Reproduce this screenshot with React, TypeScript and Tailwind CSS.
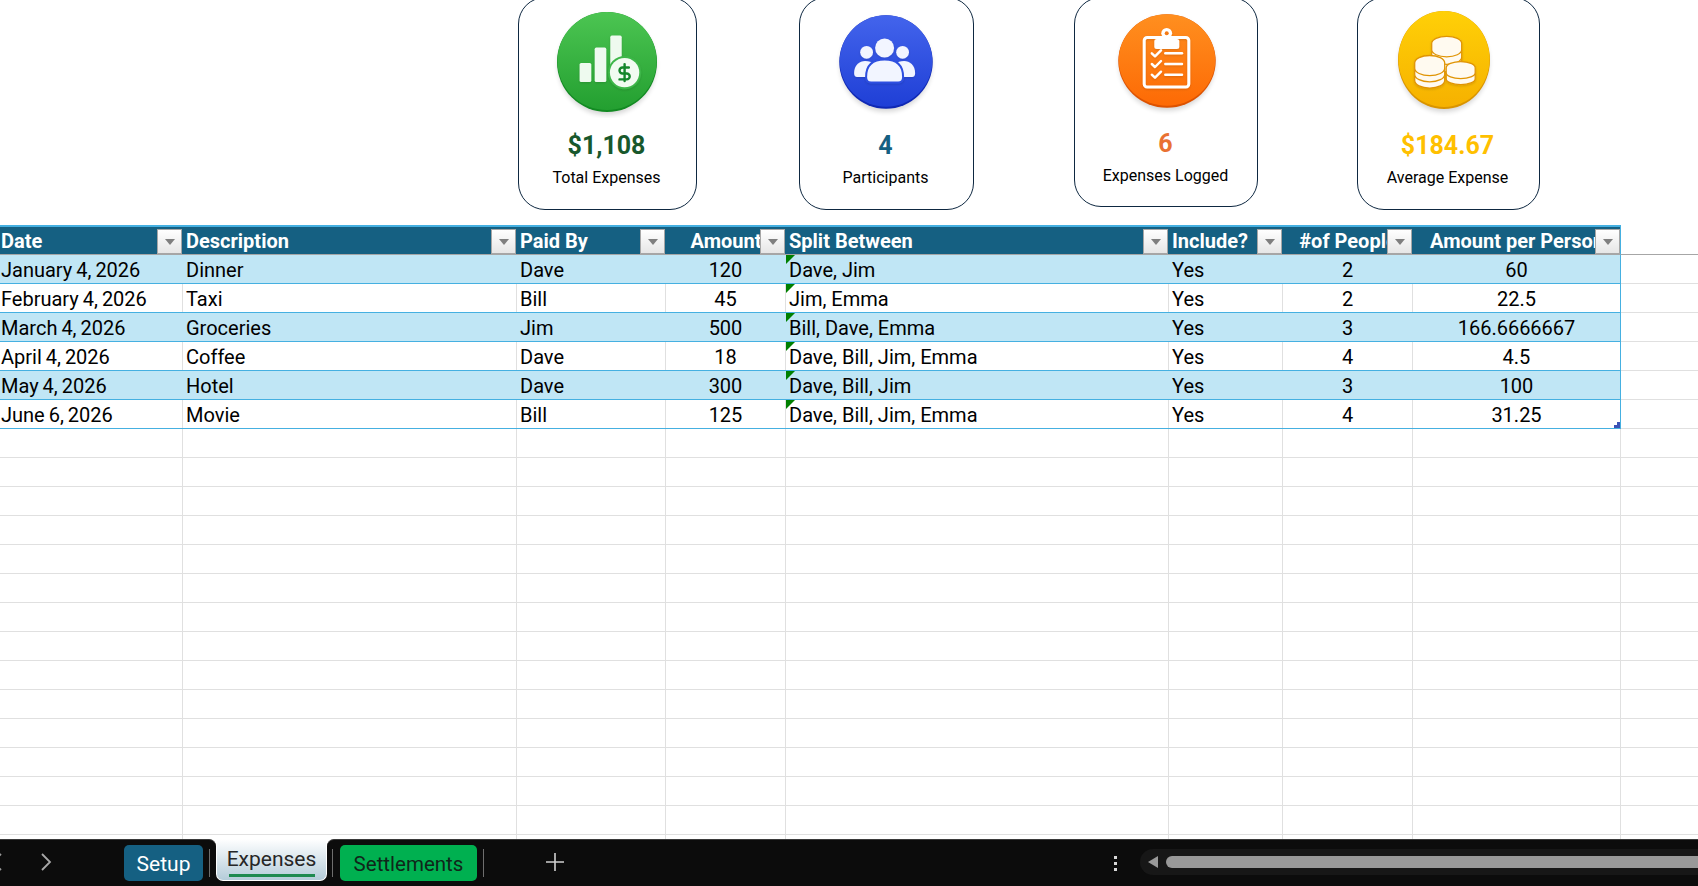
import React from "react";

const widths = ["w-[183px]", "w-[334px]", "w-[149px]", "w-[120px]", "w-[383px]", "w-[114px]", "w-[130px]", "w-[208px]"];
const align = ["pl-[1px]", "pl-[3px]", "pl-[3px]", "text-center", "pl-[3px]", "pl-[3px]", "text-center", "text-center"];

const headers = ["Date", "Description", "Paid By", "Amount", "Split Between", "Include?", "#of People", "Amount per Person"];
const rows = [
  ["January 4, 2026", "Dinner", "Dave", "120", "Dave, Jim", "Yes", "2", "60"],
  ["February 4, 2026", "Taxi", "Bill", "45", "Jim, Emma", "Yes", "2", "22.5"],
  ["March 4, 2026", "Groceries", "Jim", "500", "Bill, Dave, Emma", "Yes", "3", "166.6666667"],
  ["April 4, 2026", "Coffee", "Dave", "18", "Dave, Bill, Jim, Emma", "Yes", "4", "4.5"],
  ["May 4, 2026", "Hotel", "Dave", "300", "Dave, Bill, Jim", "Yes", "3", "100"],
  ["June 6, 2026", "Movie", "Bill", "125", "Dave, Bill, Jim, Emma", "Yes", "4", "31.25"],
];

function Disc({ id, rx, ry, top, bottom, edge, children }: { id: string; rx: number; ry: number; top: string; bottom: string; edge: string; children: React.ReactNode }) {
  return (
    <svg width="112" height="112" viewBox="-56 -56 112 112" className="block shrink-0">
      <defs>
        <linearGradient id={id} x1="0" y1="0" x2="0" y2="1">
          <stop offset="0" stopColor={top} />
          <stop offset="1" stopColor={bottom} />
        </linearGradient>
        <filter id={id + "b"} x="-30%" y="-30%" width="160%" height="160%">
          <feGaussianBlur stdDeviation="2.5" />
        </filter>
        <filter id={id + "s"} x="-30%" y="-30%" width="160%" height="160%">
          <feDropShadow dx="0" dy="1" stdDeviation="0.8" floodColor="#000" floodOpacity="0.14" />
        </filter>
      </defs>
      <ellipse cx="0" cy="3" rx={rx - 1} ry={ry} fill="#000" opacity="0.16" filter={`url(#${id}b)`} />
      <ellipse cx="0" cy="0" rx={rx} ry={ry} fill={edge} />
      <ellipse cx="0" cy="-1" rx={rx - 0.4} ry={ry - 1} fill={`url(#${id})`} />
      <g filter={`url(#${id}s)`}>{children}</g>
    </svg>
  );
}

function GreenIcon() {
  return (
    <Disc id="gr" rx={50} ry={50} top="#4cc552" bottom="#239f30" edge="#128a22">
      <rect x="-27.4" y="1" width="11.7" height="19" rx="1.6" fill="#eefaef" />
      <rect x="-12.3" y="-14.4" width="11.6" height="34.4" rx="1.6" fill="#eefaef" />
      <rect x="3.3" y="-26.4" width="11.4" height="30" rx="1.6" fill="#eefaef" />
      <circle cx="17.6" cy="10.6" r="16.6" fill="#3db648" />
      <circle cx="17.6" cy="10.6" r="14.7" fill="#f1fbf1" />
      <g transform="translate(7.4 0.4) scale(0.85)" fill="none" stroke="#12862a" strokeWidth="2.8" strokeLinecap="round" strokeLinejoin="round">
        <path d="M12 2v20" />
        <path d="M17 6H9.5a3.5 3.5 0 0 0 0 7h5a3.5 3.5 0 0 1 0 7H6" />
      </g>
    </Disc>
  );
}

function BlueIcon() {
  return (
    <Disc id="bl" rx={46.7} ry={46.7} top="#4364ec" bottom="#1f3fd6" edge="#0f28b4">
      <g transform="translate(-1.4 0)" fill="#f2f5ff">
        <circle cx="0" cy="-14" r="9.5" />
        <circle cx="-18" cy="-9.7" r="6.4" />
        <circle cx="18" cy="-9.7" r="6.4" />
        <path d="M-30.5 11C-30.5 3 -25 -1 -19.5 -1C-15.5 -1 -13 0 -11 2L-18 15L-27.5 15Q-30.5 15 -30.5 11Z" />
        <path d="M30.5 11C30.5 3 25 -1 19.5 -1C15.5 -1 13 0 11 2L18 15L27.5 15Q30.5 15 30.5 11Z" />
        <path d="M-18.5 15Q-18.5 -2.5 0 -2.5Q18.5 -2.5 18.5 15Q18.5 20.5 13.5 20.5L-13.5 20.5Q-18.5 20.5 -18.5 15Z" stroke="#2f50e0" strokeWidth="2" />
      </g>
    </Disc>
  );
}

function OrangeIcon() {
  const ys = [-7.7, 3, 13.7];
  return (
    <Disc id="or" rx={48.7} ry={46.7} top="#ff8f1f" bottom="#fd6a05" edge="#dd5200">
      <rect x="-22.8" y="-23.5" width="44.6" height="49.5" rx="3" fill="none" stroke="#fff" strokeWidth="3" />
      <rect x="-12.7" y="-22" width="25" height="10" rx="2.5" fill="#fff" />
      <circle cx="-0.3" cy="-27.7" r="5.4" fill="#fff" />
      <circle cx="-0.3" cy="-27.7" r="2" fill="#f47a12" />
      {ys.map((y) => (
        <g key={y} fill="none" stroke="#fff" strokeWidth="2.4" strokeLinecap="round" strokeLinejoin="round">
          <path d={`M${-15.2} ${y}L${-12} ${y + 3}L${-6} ${y - 3}`} />
          <path d={`M-1.7 ${y}L15 ${y}`} />
        </g>
      ))}
    </Disc>
  );
}

function Coins({ cx, y, rx, ry, layers, h }: { cx: number; y: number; rx: number; ry: number; layers: number; h: number }) {
  const items = [];
  for (let i = layers - 1; i >= 0; i--) {
    const t = y + i * h;
    items.push(
      <path
        key={i}
        d={`M${cx - rx} ${t}A${rx} ${ry} 0 0 1 ${cx + rx} ${t}L${cx + rx} ${t + h - 1}A${rx} ${ry} 0 0 1 ${cx - rx} ${t + h - 1}Z`}
        fill="#fffaf0"
        stroke="#e09406"
        strokeWidth="1.3"
      />
    );
  }
  return <g>{items}</g>;
}

function GoldIcon() {
  return (
    <Disc id="go" rx={46} ry={49} top="#ffd007" bottom="#f6b100" edge="#d99400">
      <Coins cx={2.7} y={-16.7} rx={15} ry={7} layers={3} h={7.5} />
      <Coins cx={16.7} y={7.7} rx={14.5} ry={6} layers={2} h={6} />
      <Coins cx={-14.3} y={3} rx={15} ry={7.5} layers={3} h={6.2} />
    </Disc>
  );
}

function Card({ w, ml, h, top, icon, shift, value, color, label, gap, pad }: { w: string; ml: string; h: string; top: string; icon: React.ReactNode; shift: string; value: string; color: string; label: string; gap: string; pad: string }) {
  return (
    <div className={`${w} ${ml} ${h} ${pad} shrink-0 rounded-[27px] border border-[#0e2841] bg-white flex flex-col items-center`}>
      <div className={`${top} ${shift}`}>{icon}</div>
      <div className={`${gap} text-[25px] leading-[28px] font-bold ${color}`}>{value}</div>
      <div className="mt-[8px] text-[16px] leading-[20px] text-black">{label}</div>
    </div>
  );
}

function FilterButton() {
  return (
    <div className="absolute right-[1px] top-[2px] w-[25px] h-[25px] border border-[#a6a6a6] bg-gradient-to-b from-white to-[#e6e6e6] flex items-center justify-center">
      <svg width="10" height="6" viewBox="0 0 10 6">
        <path d="M0 0H10L5 6Z" fill="#7f7f7f" />
      </svg>
    </div>
  );
}

export default function App() {
  return (
    <div className="w-[1698px] h-[886px] overflow-hidden bg-white flex flex-col [font-family:Roboto,sans-serif] text-black">
      <div className="h-[222px] -mt-[3px] mb-[6px] box-content shrink-0 flex items-start pl-[518px]">
        <Card w="w-[179px]" ml="" h="h-[213px]" pad="pr-[2px]" top="mt-[8px]" shift="" icon={<GreenIcon />} value="$1,108" color="text-[#18582c]" label="Total Expenses" gap="mt-[14px]" />
        <Card w="w-[175px]" ml="ml-[102px]" h="h-[213px]" pad="pr-[2px]" top="mt-[8px]" shift="" icon={<BlueIcon />} value="4" color="text-[#156082]" label="Participants" gap="mt-[14px]" />
        <Card w="w-[184px]" ml="ml-[100px]" h="h-[210px]" pad="pr-[1px]" top="mt-[7px]" shift="ml-[2px]" icon={<OrangeIcon />} value="6" color="text-[#e97132]" label="Expenses Logged" gap="mt-[13px]" />
        <Card w="w-[183px]" ml="ml-[99px]" h="h-[213px]" pad="pr-[2px]" top="mt-[6px]" shift="-ml-[7px]" icon={<GoldIcon />} value="$184.67" color="text-[#ffc000]" label="Average Expense" gap="mt-[16px]" />
      </div>

      <div className="flex-1 min-h-0 overflow-hidden text-[20px]">
        <div className="flex h-[30px]">
          <div className="flex w-[1621px] h-[30px] bg-[#156082] border-t-2 border-t-[#45b0e1] border-b border-b-[#a6a6a6] border-r border-r-[#45b0e1]">
            {headers.map((t, i) => (
              <div key={t} className={`relative ${widths[i]} ${align[i]} shrink-0 overflow-hidden whitespace-nowrap font-bold text-white leading-[29px]`}>
                {t}
                <FilterButton />
              </div>
            ))}
          </div>
          <div className="flex-1 border-b border-b-[#a6a6a6]" />
        </div>

        {rows.map((r, ri) => (
          <div key={ri} className="flex h-[29px]">
            <div className={`flex w-[1621px] h-[29px] border-b border-b-[#45b0e1] ${ri % 2 === 0 ? "bg-[#c0e6f5]" : "bg-white"}`}>
              {r.map((t, i) => (
                <div
                  key={i}
                  className={`relative ${widths[i]} ${align[i]} shrink-0 whitespace-nowrap leading-[30px] border-r ${i === 0 ? "[word-spacing:-1px]" : ""} ${i === 7 ? "border-r-[#45b0e1]" : ri % 2 === 0 ? "border-r-transparent" : "border-r-[#e0e0e0]"}`}
                >
                  {t}
                  {i === 4 && (
                    <svg width="9" height="9" viewBox="0 0 9 9" className="absolute left-0 top-0">
                      <path d="M0 0H9L0 9Z" fill="#008000" />
                    </svg>
                  )}
                  {ri === 5 && i === 7 && (
                    <svg width="6" height="6" viewBox="0 0 6 6" className="absolute right-0 bottom-0">
                      <path d="M6 0V6H0V3H3V0Z" fill="#3b53b5" />
                    </svg>
                  )}
                </div>
              ))}
            </div>
            <div className="flex-1 border-b border-b-[#e0e0e0]" />
          </div>
        ))}

        {Array.from({ length: 15 }).map((_, ri) => (
          <div key={ri} className="flex h-[29px] border-b border-b-[#e0e0e0]">
            {widths.map((w, i) => (
              <div key={i} className={`${w} shrink-0 border-r border-r-[#e0e0e0]`} />
            ))}
          </div>
        ))}
      </div>

      <div className="h-[47px] shrink-0 flex bg-white text-[21px]">
        <div className="w-[216px] shrink-0 bg-[#0c0c0c] rounded-tr-[7px] border-t border-t-[#3a3a3a] relative flex items-start">
          <svg width="12" height="20" viewBox="0 0 12 20" className="absolute left-[-9px] top-[12px]">
            <path d="M10 2L2 10L10 18" fill="none" stroke="#9a9a9a" strokeWidth="1.8" />
          </svg>
          <svg width="12" height="20" viewBox="0 0 12 20" className="absolute left-[40px] top-[12px]">
            <path d="M2 2L10 10L2 18" fill="none" stroke="#a8a8a8" strokeWidth="1.8" />
          </svg>
          <div className="ml-[124px] mt-[5px] w-[79px] h-[36px] pt-[3px] rounded-[5px] bg-[#156082] text-white flex items-center justify-center">Setup</div>
          <div className="ml-[6px] mt-[9px] w-px h-[28px] bg-[#6e6e6e]" />
        </div>
        <div className="w-[111px] shrink-0 bg-[#0c0c0c] h-[47px]">
          <div className="h-[42px] rounded-b-[7px] border border-t-0 border-white bg-gradient-to-b from-white to-[#b4ccd9] flex flex-col items-center text-[#262626]">
            <div className="mt-[5px] leading-[30px]">Expenses</div>
            <div className="w-[86px] h-[3px] bg-[#1e8a50]" />
          </div>
        </div>
        <div className="flex-1 bg-[#0c0c0c] rounded-tl-[7px] border-t border-t-[#3a3a3a] relative flex items-start">
          <div className="ml-[5px] mt-[9px] w-px h-[28px] bg-[#6e6e6e]" />
          <div className="ml-[7px] mt-[5px] w-[137px] h-[36px] pt-[3px] rounded-[5px] bg-[#00b050] text-[#10261a] text-[20.5px] flex items-center justify-center">Settlements</div>
          <div className="ml-[6px] mt-[9px] w-px h-[28px] bg-[#6e6e6e]" />
          <svg width="18" height="18" viewBox="0 0 18 18" className="ml-[62px] mt-[13px]">
            <path d="M9 0V18M0 9H18" stroke="#d0d0d0" strokeWidth="1.6" />
          </svg>
          <div className="ml-[550px] mt-[16px] flex flex-col gap-[3px]">
            <div className="w-[3px] h-[3px] bg-[#d8d8d8]" />
            <div className="w-[3px] h-[3px] bg-[#d8d8d8]" />
            <div className="w-[3px] h-[3px] bg-[#d8d8d8]" />
          </div>
          <div className="ml-[23px] mt-[9px] flex-1 h-[26px] bg-[#171717] rounded-l-[13px] flex items-center pl-[8px]">
            <svg width="10" height="12" viewBox="0 0 10 12">
              <path d="M0 6L10 0V12Z" fill="#999999" />
            </svg>
            <div className="ml-[8px] flex-1 h-[12px] bg-[#999999] rounded-l-[6px]" />
          </div>
        </div>
      </div>
    </div>
  );
}
